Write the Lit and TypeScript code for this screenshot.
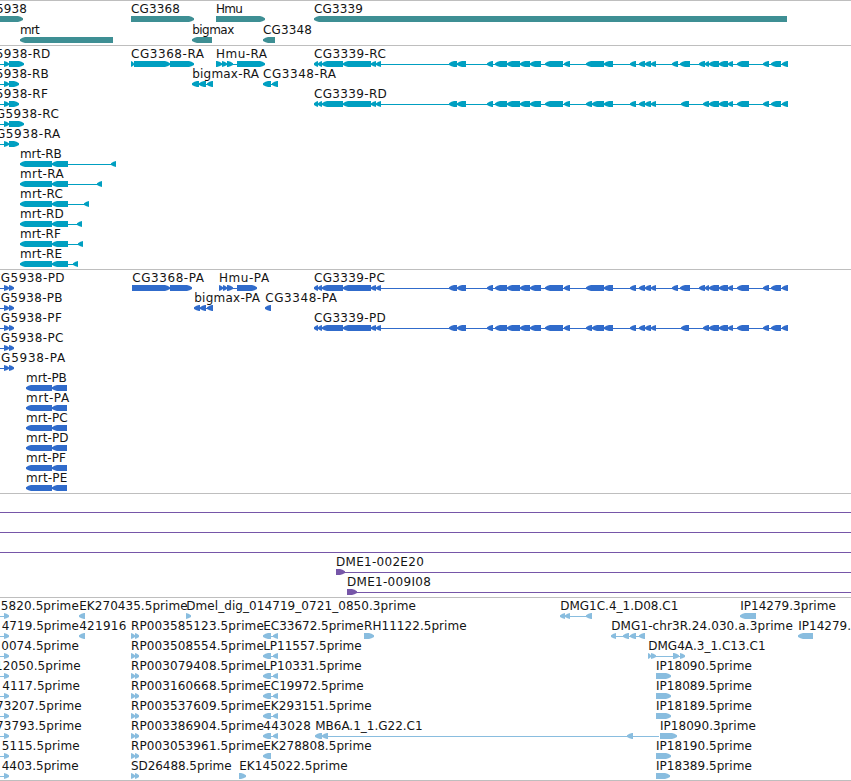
import { LitElement, html, svg, css } from "lit";
import { customElement, property } from "lit/decorators.js";

type Span = [number, number];

interface Feature {
  label: string;
  // left and right edge of the label
  from: number;
  to: number;
  dir: "left" | "right";
  exons: Span[];
  // intron line, when it runs past the exons
  line?: Span;
}

interface Track {
  name: string;
  color: string;
  rows: Feature[][];
}

const WIDTH = 851;

function left(label: string, from: number, to: number, exons: Span[], line?: Span): Feature {
  return { label, from, to, dir: "left", exons, line };
}

function right(label: string, from: number, to: number, exons: Span[], line?: Span): Feature {
  return { label, from, to, dir: "right", exons, line };
}

const cg3339Start: Span[] = [
  [314, 318], [318, 322], [322, 343], [343, 371], [371, 376], [376, 381],
  [449, 457], [457, 466], [487, 493], [495, 507], [507, 520], [520, 530],
  [530, 541], [545, 563], [564, 570],
];

const cg3339End: Span[] = [
  [709, 719], [719, 728], [728, 733], [737, 749], [763, 769], [771, 781], [782, 788],
];

const cg3339Long: Span[] = [
  ...cg3339Start,
  [586, 604], [604, 613], [630, 636], [639, 645], [645, 651], [651, 656],
  [672, 678], [680, 690], [699, 705], [705, 709],
  ...cg3339End,
];

const cg3339Short: Span[] = [
  ...cg3339Start,
  [586, 592], [592, 604], [604, 613], [630, 636], [639, 645], [645, 651], [651, 656],
  [681, 689], [703, 709],
  ...cg3339End,
];

const mrtTranscript = (name: string, to: number, end: number) =>
  left(`mrt-${name}`, 20.5, to, [[20, 52], [52, 68], [end - 5, end]]);

const mrtProtein = (name: string, to: number) =>
  left(`mrt-${name}`, 26.5, to, [[26, 52], [52, 67]]);

const cg5938 = (name: string, from: number, to: number, end: number) =>
  right(`CG5938-${name}`, from, to, [[4, 9], [9, end]], [-5, 9]);

const est = (label: string, from: number, to: number) =>
  right(label, from, to, [[4, 9]], [-5, 9]);

const rp = (label: string, to = 263.5) => right(label, 131.5, to, [[131, 135], [135, 139]]);

const pair = (label: string, to: number) => left(label, 263.7, to, [[263, 271], [273, 278]]);

const ip = (label: string, end = 671) => right(label, 656.5, 751.5, [[656, end]]);

const tracks: Track[] = [
  {
    name: "genes",
    color: "#3e8f94",
    rows: [
      [
        right("CG5938", -21.5, 26.5, [[-30, 23]]),
        right("CG3368", 131.5, 179.5, [[131, 194]]),
        right("Hmu", 216.5, 242.5, [[216, 265]]),
        left("CG3339", 314.5, 362.5, [[314, 787]]),
      ],
      [
        left("mrt", 20.5, 39.5, [[20, 113]]),
        left("bigmax", 192.7, 234, [[192, 212]]),
        left("CG3348", 263.5, 311.5, [[263, 275]]),
      ],
    ],
  },
  {
    name: "transcripts",
    color: "#009fc1",
    rows: [
      [
        cg5938("RD", -22, 50, 24),
        right("CG3368-RA", 131.5, 203.7, [[131, 134], [134, 170], [170, 194]]),
        right("Hmu-RA", 216.5, 266.7, [[216, 222], [222, 227], [227, 233], [237, 265]]),
        left("CG3339-RC", 314.5, 385.5, cg3339Long),
      ],
      [
        cg5938("RB", -22, 48.5, 19),
        left("bigmax-RA", 192.7, 258.7, [[192, 199], [199, 206], [207, 213]]),
        left("CG3348-RA", 263.5, 335.7, [[263, 271], [272, 278]]),
      ],
      [cg5938("RF", -22, 47.5, 19), left("CG3339-RD", 314.5, 386.5, cg3339Short)],
      [cg5938("RC", -12.5, 58.5, 24)],
      [cg5938("RA", -12.5, 60, 19)],
      [mrtTranscript("RB", 61.5, 116)],
      [mrtTranscript("RA", 63.5, 102)],
      [mrtTranscript("RC", 62.5, 89)],
      [mrtTranscript("RD", 63.5, 82)],
      [mrtTranscript("RF", 60.5, 83)],
      [mrtTranscript("RE", 61.8, 78)],
    ],
  },
  {
    name: "proteins",
    color: "#306bcb",
    rows: [
      [
        cg5938("PD", -7.5, 64.3, 14),
        right("CG3368-PA", 132.7, 203.7, [[132, 170], [170, 192]]),
        right("Hmu-PA", 219.5, 268.8, [[219, 223], [223, 227], [227, 233], [237, 257]]),
        left("CG3339-PC", 314.5, 384.5, cg3339Long),
      ],
      [
        cg5938("PB", -7.5, 62.3, 14),
        left("bigmax-PA", 194.7, 259.7, [[194, 200], [200, 206], [207, 213]]),
        left("CG3348-PA", 265.7, 336.7, [[265, 271]]),
      ],
      [cg5938("PF", -7.5, 61.5, 14), left("CG3339-PD", 314.5, 385.5, cg3339Short)],
      [cg5938("PC", -7.5, 63.2, 14)],
      [cg5938("PA", -7.5, 64.8, 14)],
      [mrtProtein("PB", 66.5)],
      [mrtProtein("PA", 68.8)],
      [mrtProtein("PC", 67.3)],
      [mrtProtein("PD", 68.3)],
      [mrtProtein("PF", 65.5)],
      [mrtProtein("PE", 67)],
    ],
  },
  {
    name: "clones",
    color: "#7656a8",
    rows: [
      [right("", 0, 0, [], [0, WIDTH])],
      [right("", 0, 0, [], [0, WIDTH])],
      [right("", 0, 0, [], [0, WIDTH])],
      [right("DME1-002E20", 336.5, 423.5, [[336, 345]], [336, WIDTH])],
      [right("DME1-009I08", 347.5, 430.5, [[347, 357]], [347, WIDTH])],
    ],
  },
  {
    name: "ests",
    color: "#89bddf",
    rows: [
      [
        est("5820.5prime", 1.2, 78.5),
        left("EK270435.5prime", 79.7, 187.3, [[79, 85]]),
        right("Dmel_dig_014719_0721_0850.3prime", 186.8, 415.5, [[186, 191]]),
        left("DMG1C.4_1.D08.C1", 560.7, 678, [[560, 565], [565, 570], [586, 592]]),
        left("IP14279.3prime", 740.7, 835.5, [[740, 756]]),
      ],
      [
        est("4719.5prime", 2.2, 78.5),
        left("421916", 79.7, 126, [[79, 85]]),
        rp("RP003585123.5prime"),
        pair("EC33672.5prime", 363.3),
        right("RH11122.5prime", 364.5, 466.3, [[364, 374]]),
        left("DMG1-chr3R.24.030.a.3prime", 611.7, 792.5, [[611, 616], [623, 629], [630, 636], [639, 645]]),
        left("IP14279.5prime", 798.7, 893.5, [[798, 813]]),
      ],
      [
        est("0074.5prime", 1.7, 78.5),
        rp("RP003508554.5prime"),
        pair("LP11557.5prime", 361.3),
        right("DMG4A.3_1.C13.C1", 648.7, 765.3, [[648, 651], [651, 656], [673, 679], [680, 685]]),
      ],
      [est("12050.5prime", -4.5, 80.3), rp("RP003079408.5prime"), pair("LP10331.5prime", 361.3), ip("IP18090.5prime")],
      [est("4117.5prime", 2.7, 79.5), rp("RP003160668.5prime"), pair("EC19972.5prime", 363.3), ip("IP18089.5prime")],
      [est("73207.5prime", -3.5, 81.3), rp("RP003537609.5prime"), pair("EK293151.5prime", 371.3), ip("IP18189.5prime")],
      [
        est("73793.5prime", -3.5, 81.3),
        rp("RP003386904.5prime"),
        pair("443028", 310.5),
        left("MB6A.1_1.G22.C1", 315.7, 422.3, [[315, 322], [322, 328], [627, 633]], [315, 659]),
        right("IP18090.3prime", 660.5, 755.5, [[660, 677]]),
      ],
      [
        est("5115.5prime", 2.2, 79.3),
        rp("RP003053961.5prime"),
        left("EK278808.5prime", 263.7, 371.3, [[263, 271]]),
        ip("IP18190.5prime"),
      ],
      [
        est("4403.5prime", 2.2, 78.3),
        rp("SD26488.5prime", 231.3),
        right("EK145022.5prime", 239.7, 347.3, [[239, 246]]),
        ip("IP18389.5prime", 670),
      ],
    ],
  },
];

@customElement("track-row")
export class TrackRow extends LitElement {
  @property({ attribute: false }) public features: Feature[] = [];

  private exonPoints([start, end]: Span, dir: string): string {
    const head = Math.min(end - start, 5);
    // the head narrows in a slight curve towards a blunt tip
    const [tip, neck, base] = dir === "left"
      ? [start, start + head, end]
      : [end, end - head, start];
    const mid = (tip + neck) / 2;
    return `${tip},17.2 ${mid},15.8 ${neck},15 ${base},15 ${base},21 ${neck},21 ${mid},20.2 ${tip},19`;
  }

  private renderFeature(feature: Feature) {
    const { label, from, to, dir, exons } = feature;
    const [start, end] = feature.line ?? [exons[0][0], exons[exons.length - 1][1]];

    return svg`
      <rect class="intron" x=${start} y="18" width=${end - start} height="1" />
      ${exons.map((exon) => svg`<polygon points=${this.exonPoints(exon, dir)} />`)}
      ${label
        ? svg`<text x=${from - 0.5} y="12" textLength=${to - from + 0.8}>${label}</text>`
        : null}
    `;
  }

  protected render() {
    return html`<svg>${this.features.map((feature) => this.renderFeature(feature))}</svg>`;
  }

  static styles = css`
    :host {
      display: block;
      height: 20px;
    }

    svg {
      display: block;
      width: 100%;
      height: 100%;
      overflow: visible;
      fill: currentColor;
    }

    .intron {
      shape-rendering: crispEdges;
    }

    text {
      font: 12px "DejaVu Sans", sans-serif;
      fill: #141414;
      white-space: pre;
    }
  `;
}

@customElement("app-root")
export class GenomeBrowser extends LitElement {
  protected render() {
    return html`
      ${tracks.map((track) => html`
        <section class="track ${track.name}" style="color: ${track.color}">
          ${track.rows.map((row) => html`<track-row .features=${row}></track-row>`)}
        </section>
      `)}
    `;
  }

  static styles = css`
    :host {
      display: flex;
      flex-direction: column;
      box-sizing: border-box;
      height: 781px;
      overflow: hidden;
      background: #fff;
      border-bottom: 1px solid #bebebe;
    }

    .track {
      display: flex;
      flex-direction: column;
      padding-bottom: 3px;
      border-top: 1px solid #bebebe;
    }

    .genes {
      gap: 1px;
    }

    .ests {
      padding-bottom: 2px;
    }
  `;
}
